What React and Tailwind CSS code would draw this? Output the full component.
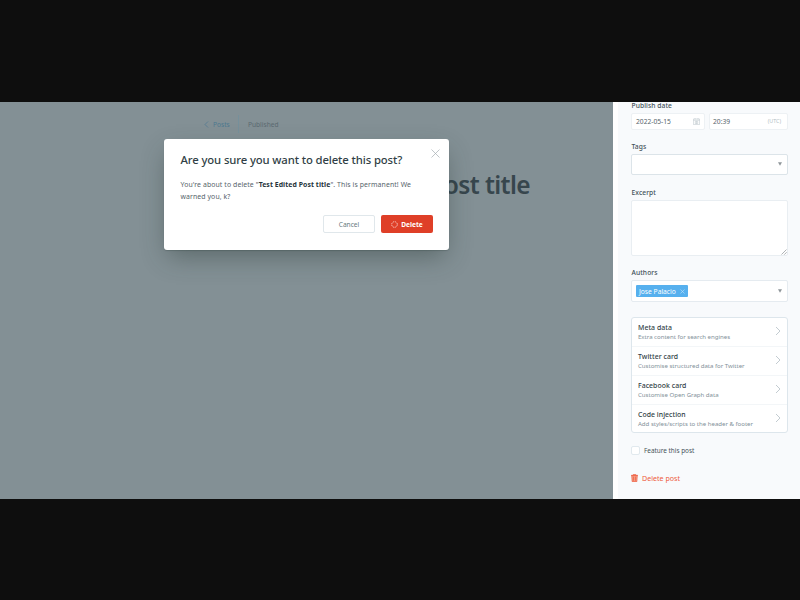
const Chevron = () => (
  <svg className="-mt-[2px] h-[10px] w-[6px] shrink-0" viewBox="0 0 6 10" fill="none" stroke="#9aa9b2" strokeWidth="0.6">
    <path d="M1 1l4 4-4 4" />
  </svg>
);

const Caret = () => (
  <svg className="-mt-px h-[4px] w-[4px] shrink-0" viewBox="0 0 4 4">
    <path d="M0 .2h4L2 3.8z" fill="#8f969a" />
  </svg>
);

const Label = ({ children }) => (
  <div className="h-[10px] pl-[0.5px] text-[6.7px] leading-[10px] font-medium tracking-[0.08px] text-[#435159]">{children}</div>
);

const cards = [
  ["Meta data", "Extra content for search engines"],
  ["Twitter card", "Customise structured data for Twitter"],
  ["Facebook card", "Customise Open Graph data"],
  ["Code injection", "Add styles/scripts to the header & footer"],
];

function Editor() {
  return (
    <main className="h-full w-[613px] bg-[#839095]">
      <div className="flex h-[47px] items-center pb-[3px] pl-[204px] text-[6.6px] leading-[10px]">
        <svg className="h-[7px] w-[5px] shrink-0" viewBox="0 0 5 7" fill="none" stroke="#4f7a92" strokeWidth="0.7">
          <path d="M4 0.5l-3 3 3 3" />
        </svg>
        <span className="ml-1 w-[25px] shrink-0 pt-px text-[#4d788f]">Posts</span>
        <span className="h-[18px] w-px shrink-0 bg-[#76909b]" />
        <span className="ml-[9px] pt-px text-[#5b6a71]">Published</span>
      </div>
      <h1 className="mt-[19px] w-[530px] text-right text-[24.5px] leading-[34px] font-semibold tracking-[-0.6px] text-[#37464d]">
        Test Edited Post title
      </h1>
    </main>
  );
}

function Sidebar() {
  return (
    <aside className="h-full w-[187px] overflow-hidden border-l-[5px] border-white bg-[#f8fafc] pl-[13px]">
      <div className="w-[157px]">
        <div className="-mt-[1px]"><Label>Publish date</Label></div>
        <div className="mt-[2px] flex h-[17px] justify-between text-[6.7px] text-[#56646b]">
          <div className="flex w-[74px] items-center justify-between rounded-[2px] border border-[#edf1f4] bg-white pr-1 pl-1">
            <span className="pt-px">2022-05-15</span>
            <svg className="h-[7px] w-[7px]" viewBox="0 0 7 7" fill="none" stroke="#bdc7cc" strokeWidth="0.6">
              <path d="M.4 1h6.2v5.6H.4zM.4 2.3h6.2M2 .1v1.3M5 .1v1.3M2.3 3.4h2.4v2.2H2.3zM3.5 3.4v2.2" />
            </svg>
          </div>
          <div className="flex w-[79px] items-center justify-between rounded-[2px] border border-[#edf1f4] bg-white pr-[6px] pl-[3px]">
            <span className="pt-px">20:39</span>
            <span className="text-[5.3px] text-[#b2bec4]">(UTC)</span>
          </div>
        </div>
        <div className="mt-[12px]"><Label>Tags</Label></div>
        <div className="mt-[2px] flex h-[21px] items-center justify-end rounded-[2px] border border-[#dce4e9] bg-white pr-[5px]">
          <Caret />
        </div>
        <div className="mt-[13px]"><Label>Excerpt</Label></div>
        <div className="mt-[2px] flex h-[56px] items-end justify-end rounded-[2px] border border-[#e9eef2] bg-white">
          <svg className="h-[6px] w-[6px]" viewBox="0 0 6 6" stroke="#8c9296" strokeWidth="0.7">
            <path d="M.5 5.5l5-5M3.2 5.7l2.5-2.5" />
          </svg>
        </div>
        <div className="mt-[12px]"><Label>Authors</Label></div>
        <div className="mt-[2px] flex h-[22px] items-center justify-between rounded-[2px] border border-[#e5ebf0] bg-white pr-[5px] pl-[4px]">
          <span className="flex h-[12px] w-[52px] items-center justify-between rounded-[1px] bg-[#56b0ee] px-[3px] pt-px text-[6.7px] leading-[11px] whitespace-nowrap text-white">
            Jose Palacio
            <svg className="h-[5px] w-[5px]" viewBox="0 0 5 5" stroke="#c3e3fa" strokeWidth="0.6">
              <path d="M.5.5l4 4M4.5.5l-4 4" />
            </svg>
          </span>
          <Caret />
        </div>
        <div className="mt-[15px] h-[116px] rounded-[3px] border border-[#dde6ec] bg-white">
          {cards.map(([title, text]) => (
            <div key={title} className="flex h-[29px] items-center justify-between border-b border-[#f3f6f8] pr-[6px] pl-[6px] last:h-[28px] last:border-0">
              <div className="whitespace-nowrap">
                <div className="text-[6.9px] leading-[10px] font-medium tracking-[0.05px] text-[#303e45]">{title}</div>
                <div className="-mt-px pb-px text-[6.1px] leading-[9px] tracking-[-0.02px] text-[#7f9099]">{text}</div>
              </div>
              <Chevron />
            </div>
          ))}
        </div>
        <div className="mt-[12px] flex h-[10px] items-center text-[6.4px] text-[#45535a]">
          <span className="mr-[4px] h-[9px] w-[9px] rounded-[2px] border border-[#e1e9ee] bg-white" />
          <span className="pt-px">Feature this post</span>
        </div>
        <div className="mt-[18px] flex h-[10px] items-center text-[7.1px] text-[#ee5b3c]">
          <svg className="mr-[4px] h-[8px] w-[7px]" viewBox="0 0 7 8" fill="none" stroke="#ee5b3c" strokeWidth="0.8">
            <path d="M0 1.4h7M2.3 1.2V.4h2.4v.8" />
            <path d="M.8 1.6l.4 6h4.6l.4-6z" fill="#f5a893" />
            <path d="M2.6 2.5v4.3M4.4 2.5v4.3" />
          </svg>
          Delete post
        </div>
      </div>
    </aside>
  );
}

function DeleteModal() {
  return (
    <section
      role="dialog"
      className="absolute top-[37px] left-[164px] h-[111px] w-[285px] rounded-[3px] bg-white pt-[12px] pr-[16px] pl-[16.5px] shadow-[0_10px_24px_-4px_rgba(40,55,50,0.45),0_1px_1px_rgba(80,95,95,0.4)]"
    >
      <div className="flex justify-between">
        <h2 className="text-[11.3px] leading-[17px] font-medium tracking-[-0.11px] whitespace-nowrap text-[#313f46]">
          Are you sure you want to delete this post?
        </h2>
        <svg className="-mt-[2px] -mr-[7px] h-[9px] w-[9px]" viewBox="0 0 9 9" stroke="#a5adb1" strokeWidth="0.7">
          <path d="M.5.5l8 8M8.5.5l-8 8" />
        </svg>
      </div>
      <p className="mt-[11px] text-[6.9px] leading-[12px] tracking-[0.1px] whitespace-nowrap text-[#56646b]">
        You're about to delete "<strong className="font-bold tracking-[0.06px] text-[#26343b]">Test Edited Post title</strong>". This is permanent! We
        <br />
        warned you, k?
      </p>
      <div className="mt-[12px] flex h-[18px] justify-end gap-[6px] text-[6.6px]">
        <button className="w-[52px] rounded-[2px] border border-[#e0e7eb] bg-white pt-px text-[#687980]">Cancel</button>
        <button className="flex w-[52px] items-center justify-center gap-[3px] rounded-[2px] bg-[#df3f28] font-bold text-white">
          <svg className="h-[7px] w-[7px]" viewBox="0 0 7 7" fill="none" stroke="#fbd5ce" strokeWidth="0.9">
            <circle cx="3.5" cy="3.5" r="2.8" strokeDasharray="1.4 0.8" />
          </svg>
          <span className="pt-px">Delete</span>
        </button>
      </div>
    </section>
  );
}

export default function App() {
  return (
    <div className="h-[600px] w-[800px] overflow-hidden bg-[#0e0e0e] pt-[102px] font-['Noto_Sans','Open_Sans',sans-serif]">
      <div className="relative flex h-[397px] overflow-hidden">
        <Editor />
        <Sidebar />
        <DeleteModal />
      </div>
    </div>
  );
}
